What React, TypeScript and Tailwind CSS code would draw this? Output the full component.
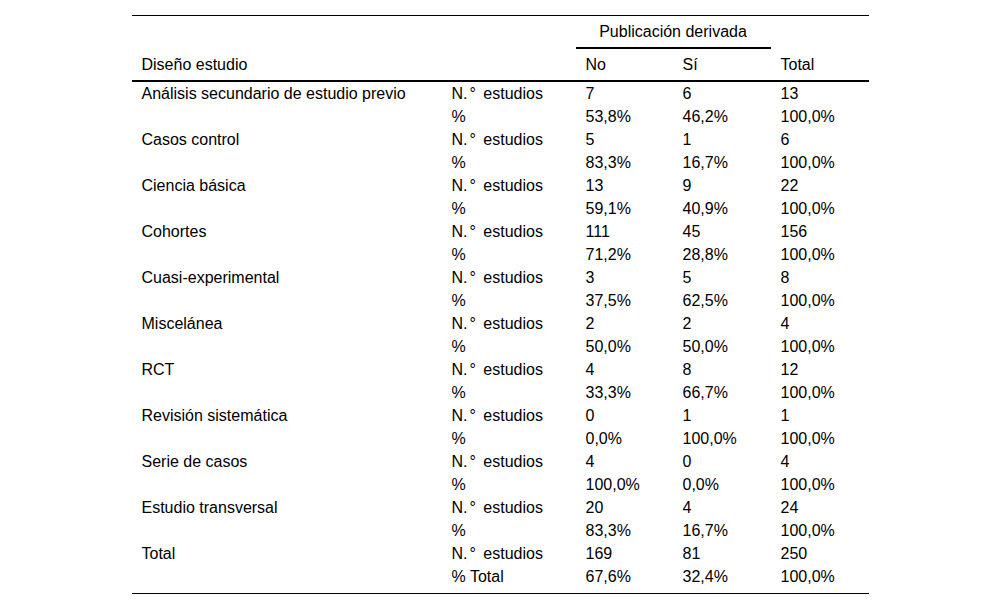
const rows: [string, string, string, string][] = [
  ['Análisis secundario de estudio previo', '7', '6', '13'],
  ['', '53,8%', '46,2%', '100,0%'],
  ['Casos control', '5', '1', '6'],
  ['', '83,3%', '16,7%', '100,0%'],
  ['Ciencia básica', '13', '9', '22'],
  ['', '59,1%', '40,9%', '100,0%'],
  ['Cohortes', '111', '45', '156'],
  ['', '71,2%', '28,8%', '100,0%'],
  ['Cuasi-experimental', '3', '5', '8'],
  ['', '37,5%', '62,5%', '100,0%'],
  ['Miscelánea', '2', '2', '4'],
  ['', '50,0%', '50,0%', '100,0%'],
  ['RCT', '4', '8', '12'],
  ['', '33,3%', '66,7%', '100,0%'],
  ['Revisión sistemática', '0', '1', '1'],
  ['', '0,0%', '100,0%', '100,0%'],
  ['Serie de casos', '4', '0', '4'],
  ['', '100,0%', '0,0%', '100,0%'],
  ['Estudio transversal', '20', '4', '24'],
  ['', '83,3%', '16,7%', '100,0%'],
  ['Total', '169', '81', '250'],
  ['', '67,6%', '32,4%', '100,0%'],
];

const grid = 'grid grid-cols-[310px_134px_97px_98px_98px]';

const NEstudios = () => (
  <>
    N.<span className="ml-[2px] mr-[3px]">°</span> estudios
  </>
);

export default function App() {
  return (
    <div className="min-h-[609px] w-[1000px] bg-white">
      <div className="mx-auto mt-[15px] w-[737px] border-t border-b border-black font-['Liberation_Sans',Arial,sans-serif] text-[16px] leading-none text-black">
        {/* header */}
        <div className={`${grid} h-[33px]`}>
          <div />
          <div />
          <div className="col-span-2 flex items-center justify-center border-b-2 border-black">Publicación derivada</div>
          <div />
        </div>
        <div className={`${grid} h-[33px] items-center border-b-2 border-black`}>
          <div className="pl-[10px]">Diseño estudio</div>
          <div />
          <div className="pl-[10px]">No</div>
          <div className="pl-[10px]">Sí</div>
          <div className="pl-[10px]">Total</div>
        </div>
        {/* body */}
        <div className="pb-[5px]">
          {rows.map((r, i) => {
            const isLast = i === rows.length - 1;
            return (
              <div key={i} className={`${grid} h-[23px] items-center`}>
                <div className="whitespace-nowrap pl-[10px]">{r[0]}</div>
                <div className="whitespace-nowrap pl-[10px]">
                  {i % 2 === 0 ? <NEstudios /> : isLast ? '% Total' : '%'}
                </div>
                <div className="pl-[10px]">{r[1]}</div>
                <div className="pl-[10px]">{r[2]}</div>
                <div className="pl-[10px]">{r[3]}</div>
              </div>
            );
          })}
        </div>
      </div>
    </div>
  );
}
